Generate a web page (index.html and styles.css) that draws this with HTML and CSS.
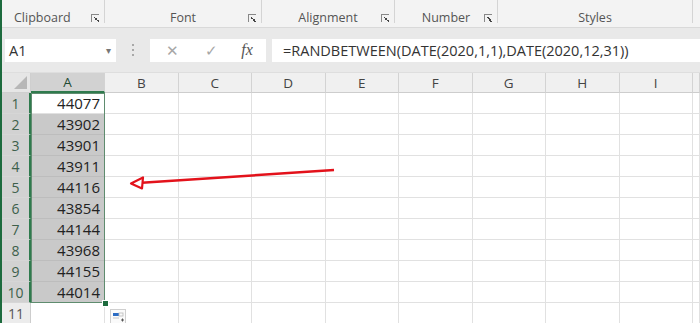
FILE: index.html
```html
<!DOCTYPE html>
<html lang="en">
<head>
  <meta charset="UTF-8" />
  <meta name="viewport" content="width=device-width, initial-scale=1.0" />
  <title>Book1 - Excel</title>
  <link rel="stylesheet" href="styles.css">
</head>
<body>
  <div id="ribbon">
    <div class="group clipboard"><span class="label">Clipboard</span><span class="launcher"></span></div>
    <div class="group font"><span class="label">Font</span><span class="launcher"></span></div>
    <div class="group align"><span class="label">Alignment</span><span class="launcher"></span></div>
    <div class="group number"><span class="label">Number</span><span class="launcher"></span></div>
    <div class="group styles"><span class="label">Styles</span></div>
  </div>

  <div id="formula-bar">
    <div class="name-box">A1<span class="drop">&#9662;</span></div>
    <div class="grip"><i></i><i></i><i></i></div>
    <div class="fx-box">
      <span class="cancel">&#x2715;</span>
      <span class="enter">&#x2713;</span>
      <span class="fx">fx</span>
    </div>
    <div class="formula">=RANDBETWEEN(DATE(2020,1,1),DATE(2020,12,31))</div>
  </div>

  <div id="sheet">
    <div id="grid"></div>
    <div class="selection"></div>
    <div class="handle"></div>
    <div class="quick">
      <svg width="16" height="15" viewBox="0 0 16 15">
        <rect x="0.5" y="0.5" width="15" height="14" fill="#fafafa" stroke="#cfcfcf"/>
        <rect x="3" y="4" width="6" height="3" fill="#2b6cc4"/>
        <rect x="9" y="4" width="4" height="3" fill="none" stroke="#b9b9b9" stroke-width="0.8"/>
        <rect x="3" y="8" width="6" height="2" fill="#e0e0e0"/>
        <path d="M11 11h3M12.5 9.5v3" stroke="#555" stroke-width="1"/>
      </svg>
    </div>
    <svg class="arrow" width="700" height="260" viewBox="0 0 700 260">
      <line x1="334" y1="97" x2="138" y2="110" stroke="#e3121b" stroke-width="2.4"/>
      <polygon points="131,110.5 143,104.5 142,115.5" fill="#fff" stroke="#e3121b" stroke-width="2.2" stroke-linejoin="round"/>
    </svg>
  </div>

  <script>
    const values = [44077, 43902, 43901, 43911, 44116, 43854, 44144, 43968, 44155, 44014];
    const cols = ['A','B','C','D','E','F','G','H','I',''];
    const grid = document.getElementById('grid');

    function cell(cls, text) {
      const c = document.createElement('div');
      c.className = cls;
      c.textContent = text || '';
      grid.appendChild(c);
    }

    // header row
    cell('corner');
    cols.forEach((col, i) => cell(i === 0 ? 'col-head active' : 'col-head', col));

    // rows 1 - 11
    for (let r = 1; r <= 11; r++) {
      cell(r <= 10 ? 'row-head active' : 'row-head', r);
      cols.forEach((col, i) => {
        if (i === 0 && r <= 10) {
          cell(r === 1 ? 'cell num current' : 'cell num picked', values[r - 1]);
        } else {
          cell('cell');
        }
      });
    }
  </script>
</body>
</html>
```

FILE: styles.css
```css
body {
  margin: 0;
  width: 698px;
  height: 323px;
  overflow: hidden;
  border-left: 2px solid #1d6b3e;
  font-family: 'Open Sans', sans-serif;
  background: #fff;
  position: relative;
}

#ribbon {
  display: flex;
  height: 27px;
  background: #f3f3f3;
  border-bottom: 1px solid #d9d9d9;
}
.group {
  position: relative;
  display: flex;
  align-items: center;
  justify-content: center;
  padding-top: 12px;
  border-right: 1px solid #d4d4d4;
  margin-bottom: 4px;
  font-size: 12.5px;
  color: #555;
  box-sizing: border-box;
}
.clipboard { width: 103px; justify-content: flex-start; padding-left: 12px; }
.font { width: 157px; }
.align { width: 133px; }
.number { width: 103px; }
.styles { width: 195px; }
.launcher {
  position: absolute;
  right: 5px;
  top: 14px;
  width: 7px;
  height: 7px;
  border-left: 1px solid #888;
  border-top: 1px solid #888;
}
.launcher::after {
  content: '';
  position: absolute;
  left: 2px;
  top: 2px;
  width: 5px;
  height: 5px;
  background: linear-gradient(45deg, transparent 40%, #444 40%, #444 60%, transparent 60%);
}

#formula-bar {
  display: flex;
  align-items: center;
  height: 44px;
  background: #e9e9e9;
  padding-left: 3px;
  border-bottom: 1px solid #dedede;
}
.name-box {
  width: 111px;
  height: 23px;
  background: #fff;
  box-sizing: border-box;
  padding-left: 4px;
  display: flex;
  align-items: center;
  justify-content: space-between;
  font-size: 14.5px;
  color: #333;
}
.drop {
  font-size: 10px;
  color: #777;
  padding-right: 5px;
}
.grip {
  width: 34px;
  display: flex;
  flex-direction: column;
  align-items: center;
  gap: 3px;
}
.grip i {
  width: 2px;
  height: 2px;
  background: #a8a8a8;
}
.fx-box {
  width: 116px;
  height: 23px;
  background: #fff;
  display: flex;
  align-items: center;
  gap: 0;
  color: #a7a7a7;
  font-size: 15px;
}
.cancel { width: 40px; text-align: center; padding-left: 2px; }
.enter { width: 38px; text-align: center; }
.fx {
  width: 34px;
  text-align: center;
  font-family: 'Liberation Serif', serif;
  font-style: italic;
  font-size: 16px;
  color: #555;
}
.formula {
  margin-left: 6px;
  flex: 1;
  height: 23px;
  background: #fff;
  padding-left: 11px;
  display: flex;
  align-items: center;
  font-size: 14.5px;
  color: #333;
  white-space: nowrap;
}

#sheet {
  position: relative;
}
#grid {
  display: grid;
  grid-template-columns: 29px 74px repeat(8, 73.5px) 1fr;
  grid-template-rows: 20px repeat(11, 21px);
}
.corner {
  background: #e6e6e6;
  border-right: 1px solid #cfcfcf;
  border-bottom: 1px solid #cfcfcf;
  position: relative;
}
.corner::after {
  content: '';
  position: absolute;
  right: 3px;
  bottom: 3px;
  border-left: 13px solid transparent;
  border-bottom: 13px solid #b7b7b7;
}
.col-head {
  background: #f0f0f0;
  border-right: 1px solid #d3d3d3;
  border-bottom: 1px solid #cdcdcd;
  display: flex;
  align-items: center;
  justify-content: center;
  font-size: 13.5px;
  color: #444;
}
.col-head.active {
  background: #d2d2d2;
  color: #1f4a33;
  border-bottom: 2px solid #2f7a4d;
}
.row-head {
  background: #ececec;
  border-right: 1px solid #cdcdcd;
  border-bottom: 1px solid #d6d6d6;
  display: flex;
  align-items: center;
  justify-content: center;
  font-size: 14px;
  color: #555;
}
.row-head.active {
  background: #d2d2d2;
  color: #3d5f4b;
  border-right: 2px solid #2f7a4d;
}
.cell {
  border-right: 1px solid #e1e1e1;
  border-bottom: 1px solid #e1e1e1;
}
.num {
  display: flex;
  align-items: center;
  justify-content: flex-end;
  padding-right: 4px;
  font-size: 15px;
  color: #222;
}
.picked {
  background: #c9c9c9;
  border-bottom-color: #bdbdbd;
}
.current {
  background: #fff;
}

.selection {
  position: absolute;
  left: 29px;
  top: 20px;
  width: 74px;
  height: 210px;
  box-sizing: border-box;
  border: 1.5px solid #5f8c6f;
  pointer-events: none;
}
.handle {
  position: absolute;
  left: 100px;
  top: 227px;
  width: 5px;
  height: 5px;
  background: #1d6b3e;
  border: 1px solid #fff;
}
.quick {
  position: absolute;
  left: 108px;
  top: 234px;
  width: 16px;
  height: 15px;
}
.arrow {
  position: absolute;
  left: -2px;
  top: 0;
  pointer-events: none;
}
```
